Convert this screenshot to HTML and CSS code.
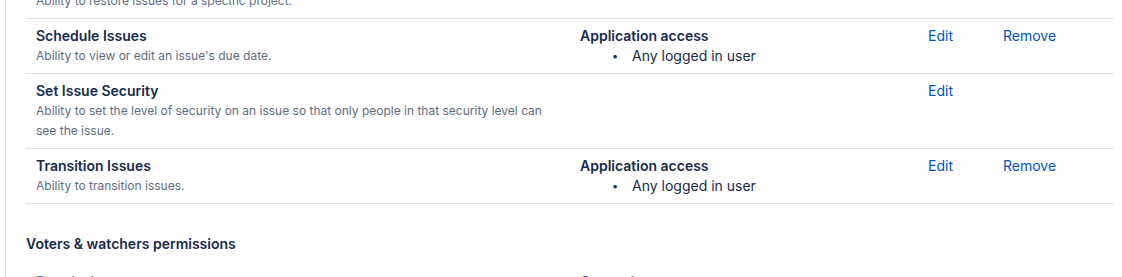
FILE: index.html
```html
<!doctype html>
<html lang="en">
<head>
	<meta charset="utf-8">
	<title>Permission scheme</title>
	<link rel="stylesheet" href="styles.css">
</head>
<body>
	<div class="page">
		<main class="content">
			<table class="perms">
				<colgroup>
					<col class="col-name">
					<col class="col-granted">
					<col class="col-edit">
					<col class="col-remove">
				</colgroup>
				<tbody>
					<tr class="row-scrolled">
						<td>
							<div class="perm-title">Restore Issues</div>
							<div class="perm-desc">Ability to restore issues for a specific project.</div>
						</td>
						<td></td>
						<td></td>
						<td></td>
					</tr>
					<tr>
						<td>
							<div class="perm-title">Schedule Issues</div>
							<div class="perm-desc">Ability to view or edit an issue's due date.</div>
						</td>
						<td>
							<div class="grant-type">Application access</div>
							<ul class="grant-list">
								<li>Any logged in user</li>
							</ul>
						</td>
						<td><a href="#">Edit</a></td>
						<td><a href="#">Remove</a></td>
					</tr>
					<tr>
						<td>
							<div class="perm-title">Set Issue Security</div>
							<div class="perm-desc">Ability to set the level of security on an issue so that only people in that security level can see the issue.</div>
						</td>
						<td></td>
						<td><a href="#">Edit</a></td>
						<td></td>
					</tr>
					<tr>
						<td>
							<div class="perm-title">Transition Issues</div>
							<div class="perm-desc">Ability to transition issues.</div>
						</td>
						<td>
							<div class="grant-type">Application access</div>
							<ul class="grant-list">
								<li>Any logged in user</li>
							</ul>
						</td>
						<td><a href="#">Edit</a></td>
						<td><a href="#">Remove</a></td>
					</tr>
				</tbody>
			</table>

			<h3 class="section-title">Voters &amp; watchers permissions</h3>

			<table class="perms">
				<colgroup>
					<col class="col-name">
					<col class="col-granted">
					<col class="col-edit">
					<col class="col-remove">
				</colgroup>
				<thead>
					<tr>
						<th>Permission</th>
						<th>Granted to</th>
						<th></th>
						<th></th>
					</tr>
				</thead>
			</table>
		</main>
	</div>
</body>
</html>
```

FILE: styles.css
```css
* {
	box-sizing: border-box;
}
body {
	margin: 0;
	background: #fff;
	color: #172b4d;
	font-family: Inter, "Noto Sans", sans-serif;
	font-size: 14px;
	line-height: 20px;
	overflow: hidden;
}

.page {
	margin-left: 5px;
	border-left: 1px solid #dfe1e6;
	min-height: 100vh;
}
.content {
	padding: 0 8px 0 20px;
	margin-top: -36px;
}

.perms {
	width: 1088px;
	border-collapse: collapse;
	table-layout: fixed;
}
.col-name {
	width: 544px;
}
.col-granted {
	width: 348px;
}
.col-edit {
	width: 75px;
}
.col-remove {
	width: 121px;
}
.perms td {
	vertical-align: top;
	padding: 7px 10px;
	border-bottom: 1px solid #dfe1e6;
}
.perms th {
	text-align: left;
	padding: 7px 10px;
	font-size: 14px;
	font-weight: 600;
	color: #5e6c84;
}
.perm-title,
.grant-type {
	font-weight: 600;
}
.perm-desc {
	font-size: 12px;
	color: #5e6c84;
	padding-right: 18px;
}
.grant-list {
	margin: 0;
	padding-left: 52px;
	list-style: none;
}
.grant-list li {
	height: 20px;
}
.grant-list li::before {
	content: "\2022";
	display: inline-block;
	width: 20px;
	margin-left: -20px;
	font-size: 11px;
	line-height: 20px;
	vertical-align: top;
}
.perms a {
	color: #0052cc;
	text-decoration: none;
}

.section-title {
	margin: 30px 0 0;
	font-size: 14px;
	font-weight: 600;
	line-height: 20px;
	padding-bottom: 11px;
}
```
